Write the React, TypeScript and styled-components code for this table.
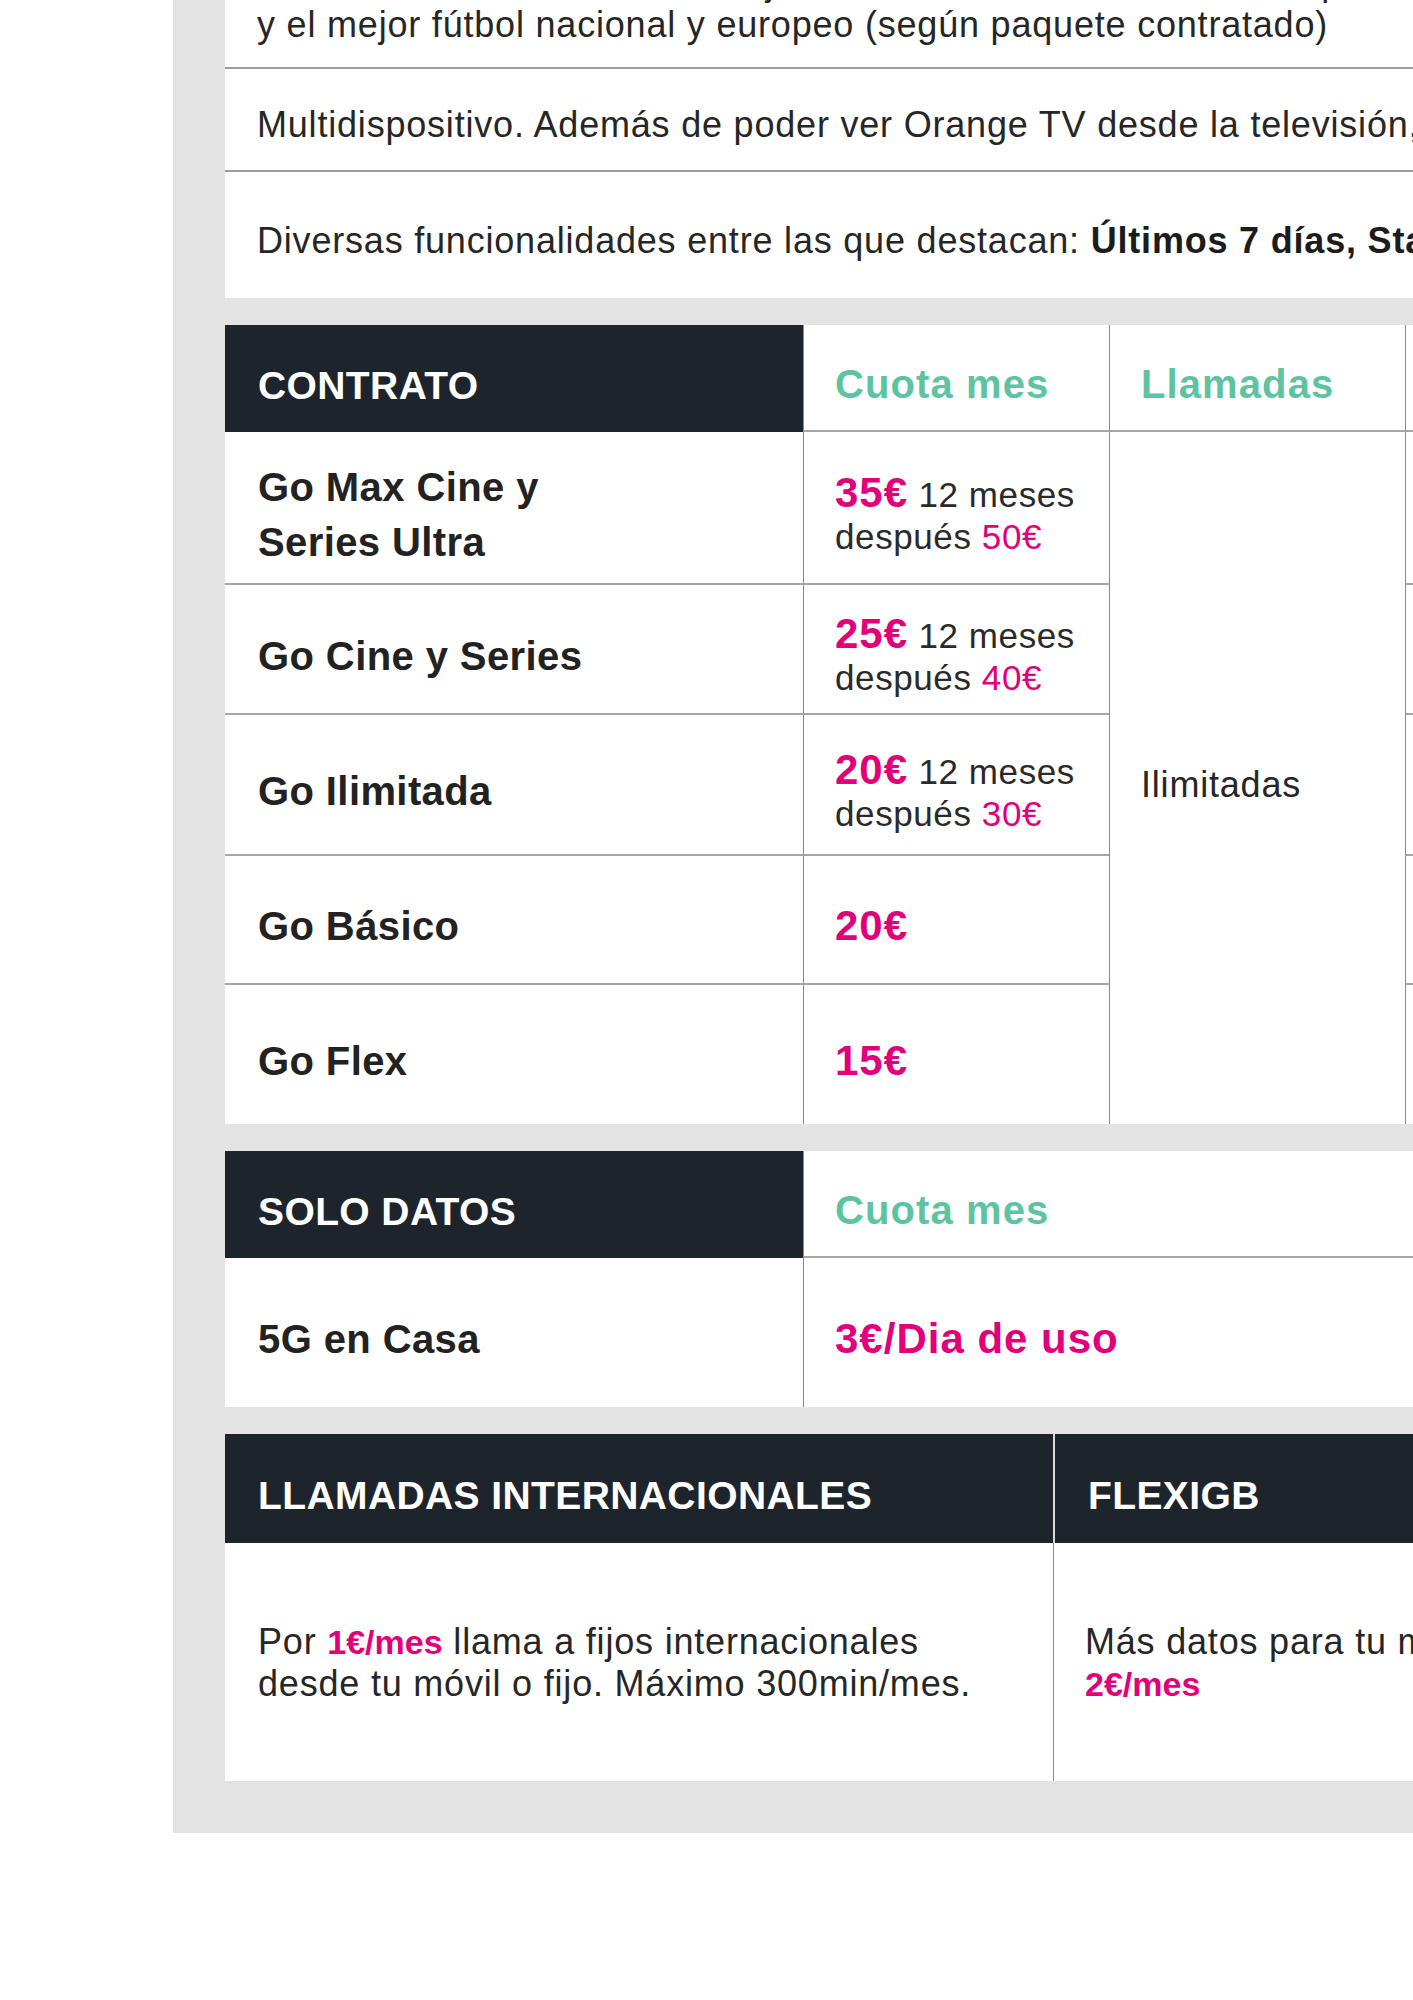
import styled, { createGlobalStyle } from "styled-components";

const GlobalStyle = createGlobalStyle`
  html, body {
    margin: 0;
    padding: 0;
    background: #ffffff;
  }
  body {
    font-family: "Liberation Sans", Arial, Helvetica, sans-serif;
    color: #262626;
  }
`;

const Page = styled.main`
  width: 1413px;
  height: 2000px;
  overflow: hidden;
  padding-left: 173px;
  box-sizing: border-box;
  background: #ffffff;
`;

const Panel = styled.section`
  width: 1700px;
  margin-top: -122px;
  padding: 52px 0 52px 52px;
  box-sizing: border-box;
  background: #e3e3e3;
  display: flex;
  flex-direction: column;
  gap: 27px;
`;

/* ---------- top info block ---------- */

const InfoCard = styled.div`
  background: #ffffff;
  display: flex;
  flex-direction: column;
`;

const InfoRow = styled.div<{ $h: number; $last?: boolean }>`
  display: flex;
  height: ${({ $h }) => $h}px;
  box-sizing: border-box;
  border-bottom: ${({ $last }) => ($last ? "none" : "2px solid #9c9c9c")};
`;

const InfoText = styled.div<{ $w?: number }>`
  flex: ${({ $w }) => ($w ? `0 0 ${$w}px` : "1")};
  display: flex;
  align-items: center;
  box-sizing: border-box;
  padding: 11px 0 0 32px;
  font-size: 36px;
  line-height: 42px;
  letter-spacing: 0.8px;
  white-space: nowrap;
  color: #262626;

  strong {
    font-weight: 700;
    color: #1c1c1c;
  }
`;

const SideCell = styled.div`
  flex: 1;
  border-left: 2px solid #b4b4b4;
`;

/* ---------- tables ---------- */

const Table = styled.div<{ $cols: string; $rows: string }>`
  display: grid;
  grid-template-columns: ${({ $cols }) => $cols};
  grid-template-rows: ${({ $rows }) => $rows};
  background: #ffffff;
`;

const HeadDark = styled.div<{ $divider?: boolean }>`
  background: #1e242b;
  color: #ffffff;
  display: flex;
  align-items: center;
  box-sizing: border-box;
  padding: 14px 32px 0 33px;
  font-size: 39px;
  font-weight: 700;
  letter-spacing: 0.4px;
  white-space: nowrap;
  border-left: ${({ $divider }) => ($divider ? "2px solid #d9d9d9" : "none")};
`;

const HeadLight = styled.div`
  display: flex;
  align-items: center;
  box-sizing: border-box;
  padding: 14px 31px 0;
  border-left: 1px solid #8a8a8a;
  border-bottom: 2px solid #a6a6a6;
  color: #5ec3a1;
  font-size: 40px;
  font-weight: 700;
  letter-spacing: 1.1px;
  white-space: nowrap;
`;

const Cell = styled.div<{ $first?: boolean; $last?: boolean; $pt?: number }>`
  display: flex;
  align-items: center;
  box-sizing: border-box;
  padding: ${({ $pt }) => ($pt ?? 14)}px 31px 0 ${({ $first }) => ($first ? 33 : 31)}px;
  border-left: ${({ $first }) => ($first ? "none" : "1px solid #8a8a8a")};
  border-bottom: ${({ $last }) => ($last ? "none" : "2px solid #a6a6a6")};
`;

const Span = styled(Cell)<{ $row: string; $col: number }>`
  grid-row: ${({ $row }) => $row};
  grid-column: ${({ $col }) => $col};
`;

const PlanName = styled.div`
  font-size: 40px;
  line-height: 55px;
  font-weight: 700;
  letter-spacing: 0.4px;
  color: #222222;
`;

const Price = styled.div`
  font-size: 35px;
  line-height: 42px;
  letter-spacing: 0.6px;
  color: #2a2a2a;
  white-space: nowrap;
`;

const Big = styled.span`
  font-size: 42px;
  font-weight: 700;
  letter-spacing: 1px;
  color: #e2007a;
`;

const Pink = styled.span<{ $bold?: boolean }>`
  color: #e2007a;
  font-weight: ${({ $bold }) => ($bold ? 700 : 400)};
  font-size: ${({ $bold }) => ($bold ? "34px" : "inherit")};
  letter-spacing: ${({ $bold }) => ($bold ? "0" : "inherit")};
`;

const Plain = styled.div`
  font-size: 36px;
  line-height: 42px;
  letter-spacing: 0.8px;
  color: #262626;
  white-space: nowrap;
`;

type Plan = {
  name: string[];
  promo?: string;
  after?: string;
  price?: string;
  data: string;
};

const plans: Plan[] = [
  { name: ["Go Max Cine y", "Series Ultra"], promo: "35€", after: "50€", data: "Ilimitados" },
  { name: ["Go Cine y Series"], promo: "25€", after: "40€", data: "Ilimitados" },
  { name: ["Go Ilimitada"], promo: "20€", after: "30€", data: "Ilimitados" },
  { name: ["Go Básico"], price: "20€", data: "60GB" },
  { name: ["Go Flex"], price: "15€", data: "10GB" },
];

function PriceText({ plan }: { plan: Plan }) {
  if (plan.price) {
    return (
      <Price>
        <Big>{plan.price}</Big>
      </Price>
    );
  }
  return (
    <Price>
      <Big>{plan.promo}</Big> 12 meses
      <br />
      después <Pink>{plan.after}</Pink>
    </Price>
  );
}

export default function App() {
  const last = plans.length - 1;

  return (
    <>
      <GlobalStyle />
      <Page>
        <Panel>
          <InfoCard>
            <InfoRow $h={139}>
              <InfoText $w={1180}>
                <div>
                  Más de 80 canales con los mejores estrenos de cine, series, deportes
                  <br />
                  y el mejor fútbol nacional y europeo (según paquete contratado)
                </div>
              </InfoText>
              <SideCell />
            </InfoRow>
            <InfoRow $h={103}>
              <InfoText>
                Multidispositivo. Además de poder ver Orange TV desde la televisión, se puede ver en el móvil, tablet u ordenador.
              </InfoText>
            </InfoRow>
            <InfoRow $h={126} $last>
              <InfoText>
                Diversas funcionalidades entre las que destacan:&nbsp;<strong>Últimos 7 días, Start Over, grabaciones en la nube</strong>
              </InfoText>
            </InfoRow>
          </InfoCard>

          <Table $cols="578px 306px 296px 1fr" $rows="107px 153px 130px 141px 129px 139px">
            <HeadDark>CONTRATO</HeadDark>
            <HeadLight>Cuota mes</HeadLight>
            <HeadLight>Llamadas</HeadLight>
            <HeadLight>Datos</HeadLight>

            {plans.map((plan, i) => (
              <Span key={`n-${plan.name[0]}`} $first $last={i === last} $row={`${i + 2}`} $col={1}>
                <PlanName>
                  {plan.name.map((line, j) => (
                    <div key={j}>{line}</div>
                  ))}
                </PlanName>
              </Span>
            ))}
            {plans.map((plan, i) => (
              <Span key={`p-${plan.name[0]}`} $last={i === last} $row={`${i + 2}`} $col={2}>
                <PriceText plan={plan} />
              </Span>
            ))}
            <Span $last $row="2 / span 5" $col={3}>
              <Plain>Ilimitadas</Plain>
            </Span>
            {plans.map((plan, i) => (
              <Span key={`d-${plan.name[0]}`} $last={i === last} $row={`${i + 2}`} $col={4}>
                <Plain>{plan.data}</Plain>
              </Span>
            ))}
          </Table>

          <Table $cols="578px 1fr" $rows="107px 149px">
            <HeadDark>SOLO DATOS</HeadDark>
            <HeadLight>Cuota mes</HeadLight>
            <Cell $first $last>
              <PlanName>5G en Casa</PlanName>
            </Cell>
            <Cell $last>
              <Price>
                <Big>3€/Dia de uso</Big>
              </Price>
            </Cell>
          </Table>

          <Table $cols="828px 1fr" $rows="109px 238px">
            <HeadDark>LLAMADAS INTERNACIONALES</HeadDark>
            <HeadDark $divider>FLEXIGB</HeadDark>
            <Cell $first $last $pt={2}>
              <Plain>
                Por <Pink $bold>1€/mes</Pink> llama a fijos internacionales
                <br />
                desde tu móvil o fijo. Máximo 300min/mes.
              </Plain>
            </Cell>
            <Cell $last $pt={2}>
              <Plain>
                Más datos para tu móvil cuando lo necesites por
                <br />
                <Pink $bold>2€/mes</Pink>
              </Plain>
            </Cell>
          </Table>
        </Panel>
      </Page>
    </>
  );
}
